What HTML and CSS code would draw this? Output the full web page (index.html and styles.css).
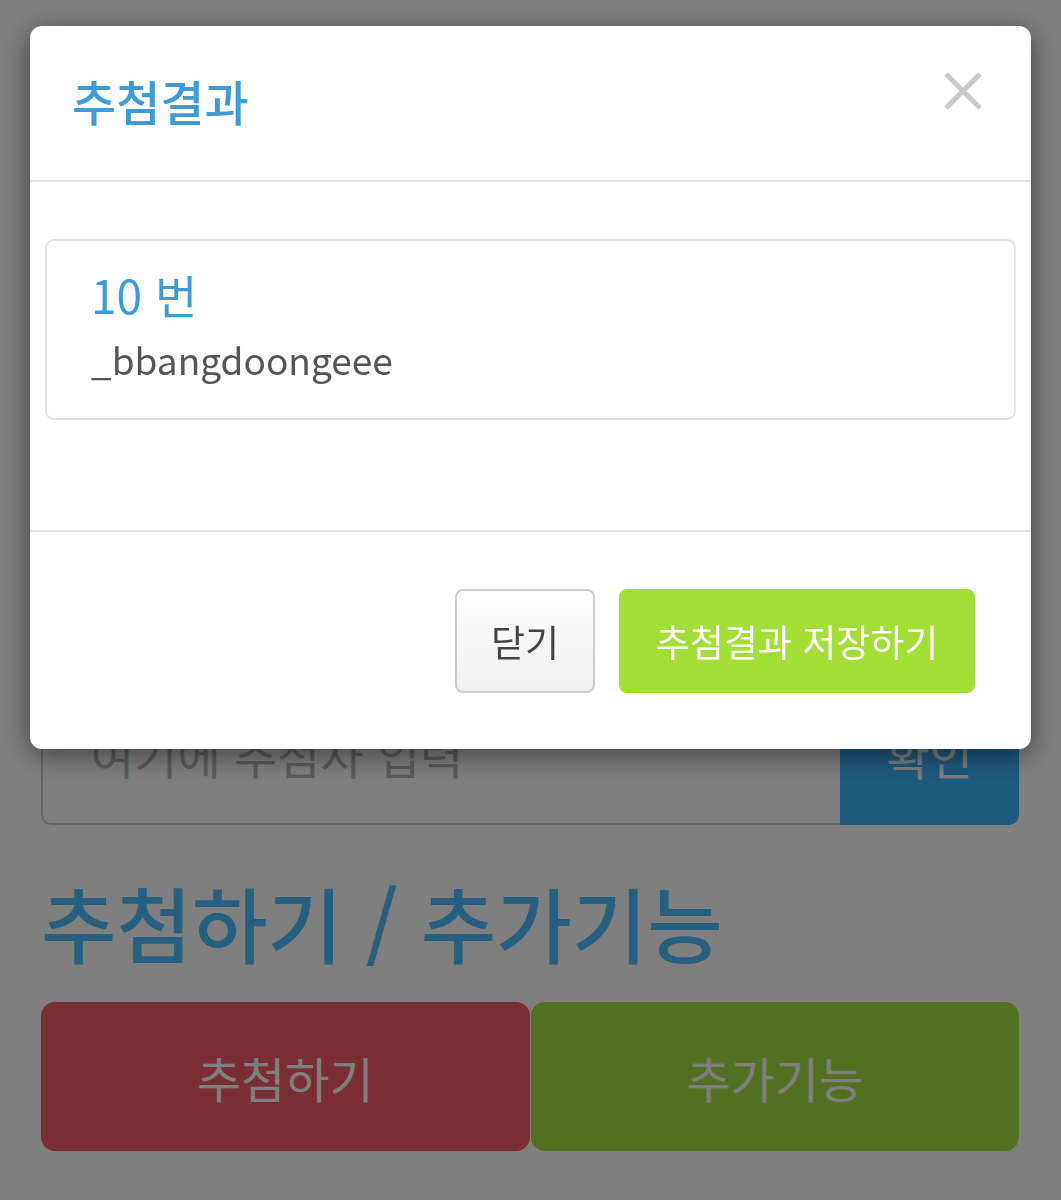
FILE: index.html
```html
<!DOCTYPE html>
<html lang="ko">
<head>
  <meta charset="UTF-8">
  <title>추첨하기</title>
  <link rel="stylesheet" href="styles.css">
</head>
<body>
  <div class="page">
    <div class="input-group">
      <input type="text" class="entry" placeholder="여기에 추첨자 입력">
      <button class="btn-confirm">확인</button>
    </div>

    <h1 class="section-title">추첨하기 / 추가기능</h1>

    <div class="action-row">
      <button class="btn-action btn-draw">추첨하기</button>
      <button class="btn-action btn-extra">추가기능</button>
    </div>
  </div>

  <div class="backdrop"></div>

  <div class="modal">
    <div class="modal-header">
      <h4 class="modal-title">추첨결과</h4>
      <button class="close" aria-label="닫기">
        <svg width="40" height="38" viewBox="0 0 40 38">
          <path d="M3 2 L37 36 M37 2 L3 36" stroke="#c9c9c9" stroke-width="5" fill="none"/>
        </svg>
      </button>
    </div>
    <div class="modal-body">
      <div class="result-panel">
        <div class="result-number">10 번</div>
        <div class="result-name">_bbangdoongeee</div>
      </div>
    </div>
    <div class="modal-footer">
      <button class="btn btn-default">닫기</button>
      <button class="btn btn-save">추첨결과 저장하기</button>
    </div>
  </div>
</body>
</html>
```

FILE: styles.css
```css
body {
  margin: 0;
  background: #fff;
  font-family: "Noto Sans CJK KR", "Noto Sans", sans-serif;
  color: #333;
}
.page {
  padding: 700px 42px 0 41px;
}
.input-group {
  display: flex;
  height: 125px;
}
.entry {
  flex: 1;
  border: 2px solid #ccc;
  border-right: none;
  border-radius: 10px 0 0 10px;
  padding: 0 48px 18px;
  font-family: inherit;
  font-size: 47px;
  color: #555;
  outline: none;
}
.entry::placeholder {
  color: #b6b6b6;
}
.btn-confirm {
  width: 179px;
  border: none;
  border-radius: 0 10px 10px 0;
  background: #3eb4ff;
  color: #fff;
  font-family: inherit;
  font-size: 47px;
  padding-bottom: 18px;
}
.section-title {
  margin: 52px 0 35px;
  font-size: 82px;
  font-weight: 500;
  line-height: 1.1;
  color: #4cbeff;
}
.action-row {
  display: flex;
  gap: 1px;
}
.btn-action {
  flex: 1;
  height: 149px;
  border: none;
  border-radius: 14px;
  color: #fff;
  font-family: inherit;
  font-size: 48px;
  opacity: 0.95;
}
.btn-draw {
  background: #f45460;
}
.btn-extra {
  background: #a2e03c;
}

.backdrop {
  position: fixed;
  top: 0;
  left: 0;
  width: 100%;
  height: 100%;
  background: rgba(0, 0, 0, 0.5);
}
.modal {
  position: fixed;
  top: 26px;
  left: 30px;
  width: 1001px;
  background: #fff;
  border-radius: 12px;
  box-shadow: 0 6px 28px rgba(0, 0, 0, 0.5);
}
.modal-header {
  height: 156px;
  box-sizing: border-box;
  display: flex;
  align-items: center;
  justify-content: space-between;
  padding: 0 48px 0 42px;
  border-bottom: 2px solid #e5e5e5;
}
.modal-title {
  margin: -6px 0 0;
  font-size: 48px;
  font-weight: 500;
  color: #3d9cd8;
}
.close {
  background: none;
  border: none;
  padding: 0;
  margin-top: -24px;
  line-height: 0;
}
.modal-body {
  padding: 57px 15px 110px;
}
.result-panel {
  border: 2px solid #e2e2e2;
  border-radius: 9px;
  padding: 26px 44px 35px;
}
.result-number {
  font-size: 46px;
  line-height: 1.2;
  color: #3d9cd8;
}
.result-name {
  margin-top: 13px;
  font-size: 37px;
  line-height: 1.3;
  color: #555;
}
.modal-footer {
  display: flex;
  justify-content: flex-end;
  gap: 24px;
  padding: 57px 56px 56px;
  border-top: 2px solid #e5e5e5;
}
.btn {
  height: 104px;
  border-radius: 8px;
  font-family: inherit;
  font-size: 37px;
  cursor: pointer;
}
.btn-default {
  width: 140px;
  border: 2px solid #ccc;
  background: linear-gradient(#fff, #efefef);
  color: #444;
}
.btn-save {
  width: 356px;
  border: none;
  background: #a3de36;
  color: #fff;
}
```
